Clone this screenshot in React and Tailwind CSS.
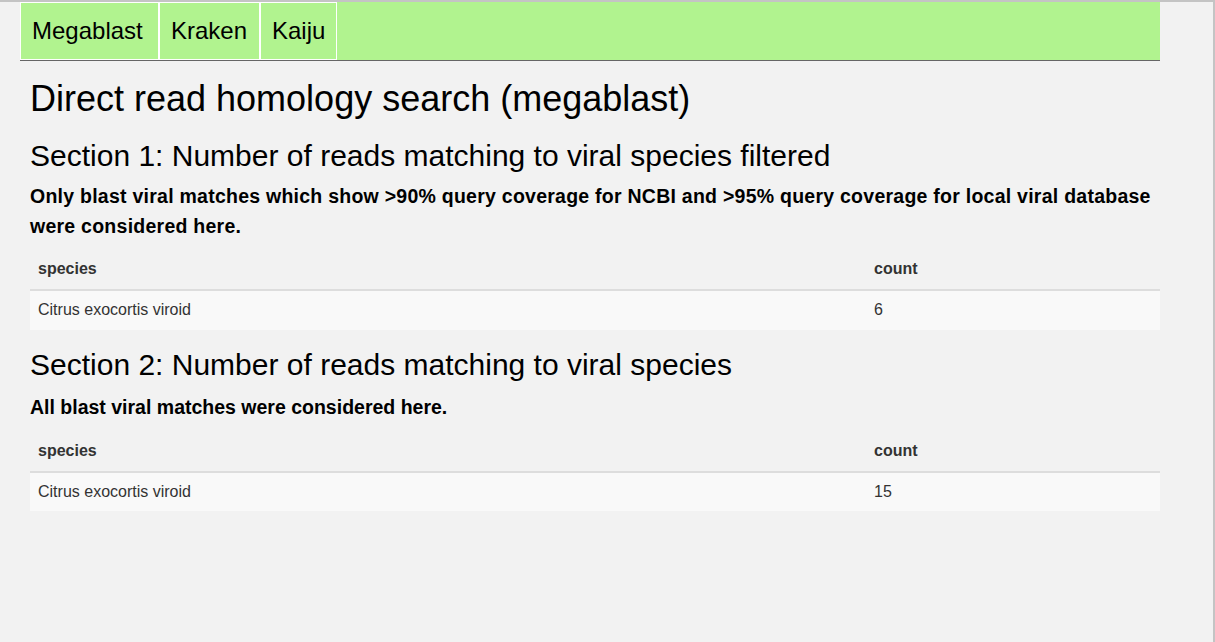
import React from "react";

const tabs = [
  { label: "Megablast", width: "w-[139px]" },
  { label: "Kraken", width: "w-[101px]" },
  { label: "Kaiju", width: "w-[77px]" },
];

function SpeciesTable({ rows, className }) {
  return (
    <table className={`w-full border-collapse text-[16px] leading-[22.85px] text-[#333] ${className}`}>
      <thead>
        <tr>
          <th className="w-[836px] text-left font-bold px-2 py-2 border-b-2 border-[#ddd]">species</th>
          <th className="text-left font-bold px-2 py-2 border-b-2 border-[#ddd]">count</th>
        </tr>
      </thead>
      <tbody>
        {rows.map((r) => (
          <tr key={r.species} className="bg-[#f9f9f9]">
            <td className="px-2 py-2 border-t border-[#ddd]">{r.species}</td>
            <td className="px-2 py-2 border-t border-[#ddd]">{r.count}</td>
          </tr>
        ))}
      </tbody>
    </table>
  );
}

export default function App() {
  return (
    <div
      className="min-h-screen bg-[#f2f2f2] border-t-2 border-r-2 border-[#c4c4c4] text-black"
      style={{ fontFamily: '"Liberation Sans", Arial, sans-serif' }}
    >
      <div className="ml-5 w-[1140px]">
        {/* Tab bar */}
        <div className="flex bg-[#b1f38f] border-b border-[#666] h-[59px]">
          {tabs.map((t) => (
            <div key={t.label} className={`${t.width} flex items-center pl-[11px] text-[24px] border border-white`}>
              {t.label}
            </div>
          ))}
        </div>

        <div className="pl-[10px]">
          <h1 className="text-[36px] leading-[40px] mt-[18px] mb-[10px]">Direct read homology search (megablast)</h1>

          <h2 className="text-[30px] leading-[33px] mt-5 mb-[9px]">Section 1: Number of reads matching to viral species filtered</h2>
          <p className="text-[19.5px] leading-[30px] font-bold tracking-[0.25px] mb-[9px]">
            Only blast viral matches which show &gt;90% query coverage for NCBI and &gt;95% query coverage for local viral database were considered here.
          </p>
          <SpeciesTable className="mb-[18px]" rows={[{ species: "Citrus exocortis viroid", count: 6 }]} />

          <h2 className="text-[30px] leading-[33px] mt-[18px] mb-[11px]">Section 2: Number of reads matching to viral species</h2>
          <p className="text-[19.5px] leading-[30px] font-bold mb-[10px]">All blast viral matches were considered here.</p>
          <SpeciesTable className="mb-5" rows={[{ species: "Citrus exocortis viroid", count: 15 }]} />
        </div>
      </div>
    </div>
  );
}
